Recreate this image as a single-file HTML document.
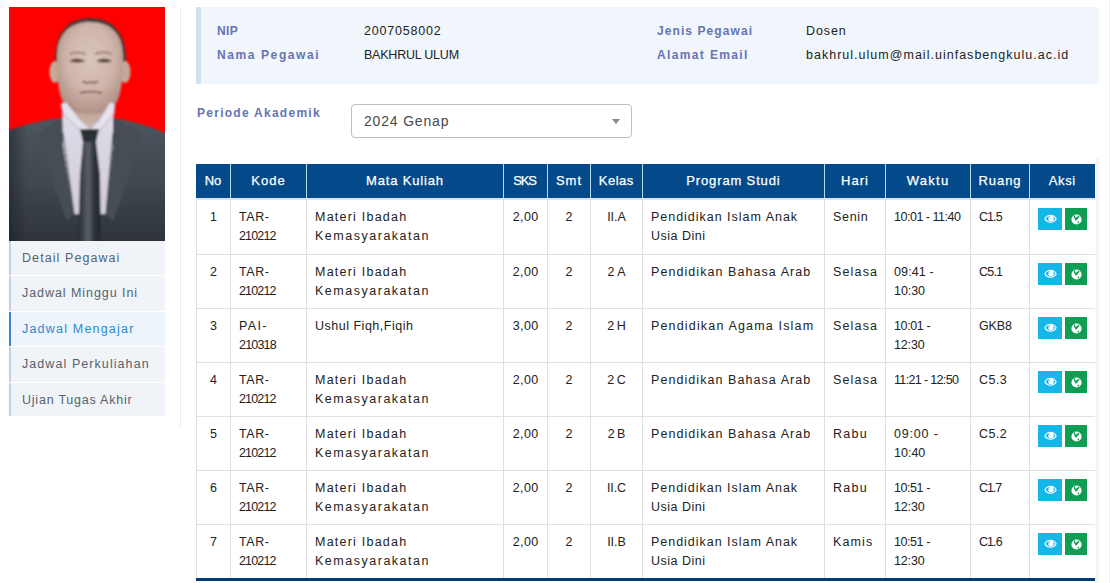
<!DOCTYPE html>
<html><head><meta charset="utf-8">
<style>
* { margin:0; padding:0; box-sizing:border-box; }
html,body { width:1110px; height:583px; overflow:hidden; background:#fff; }
body { font-family:"Liberation Sans", sans-serif; position:relative; color:#222; }
#photo { position:absolute; left:9px; top:7px; width:156px; height:234px; overflow:hidden; }
#photo svg { display:block; }
.menu { position:absolute; left:9px; width:156px; height:34px; background:#f0f4f8; border-left:2px solid #c5d0db; color:#56626d; font-size:12.5px; line-height:35px; padding-left:11px; white-space:nowrap; overflow:hidden; }
.menu.active { border-left-color:#3a86cc; color:#2b8ad2; background:#edf4fb; }
#sideline { position:absolute; left:180px; top:7px; width:1px; height:421px; background:#ececec; }
#info { position:absolute; left:196px; top:7px; width:903px; height:77px; background:#f0f6fc; border-left:5px solid #cfe1ef; }
.lbl { position:absolute; font-size:12px; font-weight:bold; color:#6674b4; white-space:nowrap; }
.val { position:absolute; font-size:12.5px; color:#222; white-space:nowrap; }
#periode { position:absolute; left:197px; top:106px; font-size:12px; font-weight:bold; color:#6674b4; white-space:nowrap; }
#sel { position:absolute; left:351px; top:104px; width:281px; height:34px; border:1px solid #bfbfbf; border-radius:4px; background:#fff; }
#sel .st { position:absolute; left:12px; top:8px; font-size:14px; color:#4a4a4a; white-space:nowrap; }
#sel i { position:absolute; left:260px; top:14px; width:0; height:0; border-style:solid; border-width:5px 4px 0 4px; border-color:#888 transparent transparent transparent; }
.th { position:absolute; top:164px; height:34px; background:#044a8b; color:#fff; font-size:13px; -webkit-text-stroke:0.25px #fff; line-height:34px; text-align:center; white-space:nowrap; }
.thsep { position:absolute; top:164px; width:1px; height:34px; background:#b3daf2; }
#thb { position:absolute; left:196px; top:198px; width:899px; height:2px; background:#dfe3e8; }
.td { position:absolute; padding:8px 8px; font-size:12.5px; line-height:19px; color:#222; white-space:nowrap; }
.td.c { text-align:center; padding:8px 0; }
.hsep { position:absolute; left:196px; width:899px; height:1px; background:#e0e0e0; }
.vsep { position:absolute; top:198px; width:1px; height:380px; background:#e0e0e0; }
#tfoot { position:absolute; left:196px; top:578px; width:899px; height:3px; background:#033c72; }
#scr { position:absolute; left:1096px; top:158px; width:3px; height:425px; background:#f4f4f4; border-radius:1px 1px 0 0; }
.btn { position:absolute; height:22px; display:flex; align-items:center; justify-content:center; }
.btn svg { display:block; }
.bi { left:1038px; width:24px; background:#17b6e9; }
.bs { left:1065px; width:22px; background:#0e9d52; }
#rline { position:absolute; left:1109px; top:0; width:1px; height:583px; background:#f0f0f0; }

</style></head><body>
<div id="photo"><svg width="156" height="234" viewBox="0 0 156 234">
<defs>
<radialGradient id="skin" cx="50%" cy="40%" r="64%"><stop offset="0" stop-color="#d9c5bb"/><stop offset="0.55" stop-color="#cfb5aa"/><stop offset="1" stop-color="#ac8c80"/></radialGradient>
<linearGradient id="neck" x1="0" y1="0" x2="0" y2="1"><stop offset="0" stop-color="#b39489"/><stop offset="1" stop-color="#cdb4a8"/></linearGradient>
<linearGradient id="suit" x1="0" y1="0" x2="0" y2="1"><stop offset="0" stop-color="#4d555d"/><stop offset="0.5" stop-color="#40474f"/><stop offset="1" stop-color="#2b3037"/></linearGradient><linearGradient id="ledge" x1="0" y1="0" x2="1" y2="0"><stop offset="0" stop-color="#1c1f25" stop-opacity="0.8"/><stop offset="1" stop-color="#1c1f25" stop-opacity="0"/></linearGradient>
<linearGradient id="shirt" x1="0" y1="0" x2="0" y2="1"><stop offset="0" stop-color="#e0dce8"/><stop offset="1" stop-color="#d0ccd9"/></linearGradient>
<linearGradient id="tie" x1="0" y1="0" x2="1" y2="0"><stop offset="0" stop-color="#25292f"/><stop offset="0.45" stop-color="#5a616a"/><stop offset="0.7" stop-color="#2f3339"/><stop offset="1" stop-color="#22252b"/></linearGradient>
<clipPath id="suitclip"><path d="M-8 127 C10 118 34 113 53 111 L104 111 C124 114 146 120 164 130 L164 244 L-8 244 Z"/></clipPath><filter id="bl" x="-20%" y="-20%" width="140%" height="140%"><feGaussianBlur stdDeviation="0.8"/></filter>
</defs>
<rect width="156" height="234" fill="#fe0000"/>
<g filter="url(#bl)">
<path d="M46 56 C45 24 61 11 81 11 C103 11 118 26 117 56 L115 74 L47 74 Z" fill="#4a3a3a"/>
<ellipse cx="46" cy="65" rx="5.5" ry="11" fill="#c6a898"/>
<ellipse cx="116" cy="65" rx="5.5" ry="11" fill="#c6a898"/>
<path d="M-8 127 C10 118 34 113 53 111 L104 111 C124 114 146 120 164 130 L164 244 L-8 244 Z" fill="url(#suit)"/>
<path d="M53 96 L105 96 L104 140 L97 207 L65 207 L54 140 Z" fill="url(#shirt)"/>
<path d="M56 84 L105 84 L104 100 L81 121 L57 100 Z" fill="url(#neck)"/>
<path d="M48 52 C47 25 63 15 81 15 C101 15 115 26 114 52 C114 74 112 90 106 98 C100 105 90 107 81 107 C72 107 62 105 56 98 C50 90 48 74 48 52 Z" fill="url(#skin)"/>
<path d="M52 97 L57 95 L73 115 L81 122 L74 126 L54 107 Z" fill="#e6e2ec" stroke="#a8a4b4" stroke-width="0.8"/>
<path d="M106 97 L101 95 L89 115 L81 122 L88 126 L105 107 Z" fill="#e6e2ec" stroke="#a8a4b4" stroke-width="0.8"/>
<rect x="-8" y="110" width="26" height="134" fill="url(#ledge)" clip-path="url(#suitclip)"/>
<path d="M53 111 L54 140 L65 207 L58 214 L38 160 L30 126 Z" fill="#464d55"/>
<path d="M104 111 L104 140 L97 207 L104 214 L124 160 L132 126 Z" fill="#464d55"/>
<path d="M54 126 L65 207" stroke="#363b42" stroke-width="1"/>
<path d="M104 126 L97 207" stroke="#363b42" stroke-width="1"/>
<path d="M71 122 L90 122 L87 135 L74 135 Z" fill="#2c3036"/>
<path d="M74 135 L87 135 L91 168 L92 244 L69 244 L71 168 Z" fill="url(#tie)"/>
<path d="M61 47 C65 45 72 45 77 47 M86 47 C90 45 97 45 103 47" stroke="#8a7068" stroke-width="1.6" fill="none"/>
<path d="M61 54 C65 51.5 71 51.5 75.5 54 C71 55.5 65 55.5 61 54 Z M88 54 C92 51.5 98 51.5 102.5 54 C98 55.5 92 55.5 88 54 Z" fill="#4a3430" stroke="#5a4440" stroke-width="0.8"/>
<path d="M74 74 C76 76 79 76 81 75 C83 76 86 76 89 74" stroke="#7a5a52" stroke-width="1.8" fill="none"/>
<path d="M71 86 C77 84.5 86 84.5 93 86" stroke="#8a645c" stroke-width="2" fill="none"/>
<path d="M74 89 C78 91 85 91 90 89" stroke="#c9a29a" stroke-width="1.6" fill="none"/>
</g>
</svg>
</div>
<div class="menu" style="top:241px;height:34px"><span style="letter-spacing:1.077px;margin-right:-1.077px">Detail Pegawai</span></div><div class="menu" style="top:276px;height:35px"><span style="letter-spacing:0.938px;margin-right:-0.938px">Jadwal Minggu Ini</span></div><div class="menu active" style="top:312px;height:34px"><span style="letter-spacing:1.2px;margin-right:-1.2px">Jadwal Mengajar</span></div><div class="menu" style="top:347px;height:35px"><span style="letter-spacing:1.071px;margin-right:-1.071px">Jadwal Perkuliahan</span></div><div class="menu" style="top:383px;height:33px"><span style="letter-spacing:0.775px;margin-right:-0.775px">Ujian Tugas Akhir</span></div>
<div id="sideline"></div>
<div id="info"></div>
<div class="lbl" style="left:217px;top:24px"><span style="letter-spacing:0.35px;margin-right:-0.35px">NIP</span></div>
<div class="lbl" style="left:217px;top:48px"><span style="letter-spacing:1.6px;margin-right:-1.6px">Nama Pegawai</span></div>
<div class="val" style="left:364px;top:24px"><span style="letter-spacing:0.811px;margin-right:-0.811px">2007058002</span></div>
<div class="val" style="left:364px;top:48px"><span style="letter-spacing:-0.218px;margin-right:0.218px">BAKHRUL ULUM</span></div>
<div class="lbl" style="left:657px;top:24px"><span style="letter-spacing:1.083px;margin-right:-1.083px">Jenis Pegawai</span></div>
<div class="lbl" style="left:657px;top:48px"><span style="letter-spacing:1.364px;margin-right:-1.364px">Alamat Email</span></div>
<div class="val" style="left:806px;top:24px"><span style="letter-spacing:0.9px;margin-right:-0.9px">Dosen</span></div>
<div class="val" style="left:806px;top:48px"><span style="letter-spacing:1.016px;margin-right:-1.016px">bakhrul.ulum@mail.uinfasbengkulu.ac.id</span></div>
<div id="periode"><span style="letter-spacing:1.267px;margin-right:-1.267px">Periode Akademik</span></div>
<div id="sel"><div class="st"><span style="letter-spacing:0.822px;margin-right:-0.822px">2024 Genap</span></div><i></i></div>
<div id="scr"></div><div id="rline"></div>
<div class="th" style="left:196px;width:34px"><span style="letter-spacing:0.0px;margin-right:-0.0px">No</span></div><div class="th" style="left:230px;width:76px"><span style="letter-spacing:1.1px;margin-right:-1.1px">Kode</span></div><div class="th" style="left:306px;width:197px"><span style="letter-spacing:0.84px;margin-right:-0.84px">Mata Kuliah</span></div><div class="th" style="left:503px;width:44px"><span style="letter-spacing:-1.15px;margin-right:1.15px">SKS</span></div><div class="th" style="left:547px;width:43px"><span style="letter-spacing:1.0px;margin-right:-1.0px">Smt</span></div><div class="th" style="left:590px;width:52px"><span style="letter-spacing:0.5px;margin-right:-0.5px">Kelas</span></div><div class="th" style="left:642px;width:182px"><span style="letter-spacing:0.858px;margin-right:-0.858px">Program Studi</span></div><div class="th" style="left:824px;width:61px"><span style="letter-spacing:1.067px;margin-right:-1.067px">Hari</span></div><div class="th" style="left:885px;width:85px"><span style="letter-spacing:1.275px;margin-right:-1.275px">Waktu</span></div><div class="th" style="left:970px;width:59px"><span style="letter-spacing:0.95px;margin-right:-0.95px">Ruang</span></div><div class="th" style="left:1029px;width:66px"><span style="letter-spacing:0.567px;margin-right:-0.567px">Aksi</span></div><div class="thsep" style="left:230px"></div><div class="thsep" style="left:306px"></div><div class="thsep" style="left:503px"></div><div class="thsep" style="left:547px"></div><div class="thsep" style="left:590px"></div><div class="thsep" style="left:642px"></div><div class="thsep" style="left:824px"></div><div class="thsep" style="left:885px"></div><div class="thsep" style="left:970px"></div><div class="thsep" style="left:1029px"></div><div class="td c" style="left:197px;top:200px;width:33px"><span style="letter-spacing:0.3px;margin-right:-0.3px">1</span></div><div class="td" style="left:231px;top:200px;width:75px"><span style="letter-spacing:0.6px;margin-right:-0.6px">TAR-</span><br><span style="letter-spacing:-0.84px;margin-right:0.84px">210212</span></div><div class="td" style="left:307px;top:200px;width:196px"><span style="letter-spacing:1.225px;margin-right:-1.225px">Materi Ibadah</span><br><span style="letter-spacing:1.515px;margin-right:-1.515px">Kemasyarakatan</span></div><div class="td c" style="left:504px;top:200px;width:43px"><span style="letter-spacing:0.433px;margin-right:-0.433px">2,00</span></div><div class="td c" style="left:548px;top:200px;width:42px"><span style="letter-spacing:0.3px;margin-right:-0.3px">2</span></div><div class="td c" style="left:591px;top:200px;width:51px"><span style="letter-spacing:-0.067px;margin-right:0.067px">II.A</span></div><div class="td" style="left:643px;top:200px;width:181px"><span style="letter-spacing:0.98px;margin-right:-0.98px">Pendidikan Islam Anak</span><br><span style="letter-spacing:0.5px;margin-right:-0.5px">Usia Dini</span></div><div class="td" style="left:825px;top:200px;width:60px"><span style="letter-spacing:0.675px;margin-right:-0.675px">Senin</span></div><div class="td" style="left:886px;top:200px;width:84px"><span style="letter-spacing:-0.483px;margin-right:0.483px">10:01 - 11:40</span></div><div class="td" style="left:971px;top:200px;width:58px"><span style="letter-spacing:-0.933px;margin-right:0.933px">C1.5</span></div><div class="btn bi" style="top:208px"><svg width="13" height="10" viewBox="0 0 13 10"><path d="M0.9 4.7 C3.2 0.1 9.8 0.1 12.1 4.7 C9.8 9.3 3.2 9.3 0.9 4.7 Z" fill="none" stroke="#fff" stroke-width="1.2"/><circle cx="6.9" cy="4.3" r="2.9" fill="#fff"/><path d="M4.9 5.2 C4.6 3.8 5 2.8 5.9 2.2" stroke="#17b6e9" stroke-width="0.8" fill="none"/></svg></div><div class="btn bs" style="top:208px"><svg width="11" height="11" viewBox="0 0 11 11"><circle cx="5.5" cy="5.5" r="5.1" fill="#fff"/><path d="M2.6 1.4 L3.9 1.2 L4.6 3.9 L7.6 1.7 L8.6 2.6 L5.4 6.6 L4.7 6.8 L3 3.6 Z" fill="#0e9d52"/><circle cx="7.3" cy="8.4" r="0.8" fill="#0e9d52"/></svg></div><div class="td c" style="left:197px;top:255px;width:33px"><span style="letter-spacing:0.3px;margin-right:-0.3px">2</span></div><div class="td" style="left:231px;top:255px;width:75px"><span style="letter-spacing:0.6px;margin-right:-0.6px">TAR-</span><br><span style="letter-spacing:-0.84px;margin-right:0.84px">210212</span></div><div class="td" style="left:307px;top:255px;width:196px"><span style="letter-spacing:1.225px;margin-right:-1.225px">Materi Ibadah</span><br><span style="letter-spacing:1.515px;margin-right:-1.515px">Kemasyarakatan</span></div><div class="td c" style="left:504px;top:255px;width:43px"><span style="letter-spacing:0.433px;margin-right:-0.433px">2,00</span></div><div class="td c" style="left:548px;top:255px;width:42px"><span style="letter-spacing:0.3px;margin-right:-0.3px">2</span></div><div class="td c" style="left:591px;top:255px;width:51px"><span style="letter-spacing:-0.05px;margin-right:0.05px">2 A</span></div><div class="td" style="left:643px;top:255px;width:181px"><span style="letter-spacing:1.067px;margin-right:-1.067px">Pendidikan Bahasa Arab</span></div><div class="td" style="left:825px;top:255px;width:60px"><span style="letter-spacing:1.16px;margin-right:-1.16px">Selasa</span></div><div class="td" style="left:886px;top:255px;width:84px"><span style="letter-spacing:0.133px;margin-right:-0.133px">09:41 -</span><br><span style="letter-spacing:-0.075px;margin-right:0.075px">10:30</span></div><div class="td" style="left:971px;top:255px;width:58px"><span style="letter-spacing:-0.8px;margin-right:0.8px">C5.1</span></div><div class="btn bi" style="top:263px"><svg width="13" height="10" viewBox="0 0 13 10"><path d="M0.9 4.7 C3.2 0.1 9.8 0.1 12.1 4.7 C9.8 9.3 3.2 9.3 0.9 4.7 Z" fill="none" stroke="#fff" stroke-width="1.2"/><circle cx="6.9" cy="4.3" r="2.9" fill="#fff"/><path d="M4.9 5.2 C4.6 3.8 5 2.8 5.9 2.2" stroke="#17b6e9" stroke-width="0.8" fill="none"/></svg></div><div class="btn bs" style="top:263px"><svg width="11" height="11" viewBox="0 0 11 11"><circle cx="5.5" cy="5.5" r="5.1" fill="#fff"/><path d="M2.6 1.4 L3.9 1.2 L4.6 3.9 L7.6 1.7 L8.6 2.6 L5.4 6.6 L4.7 6.8 L3 3.6 Z" fill="#0e9d52"/><circle cx="7.3" cy="8.4" r="0.8" fill="#0e9d52"/></svg></div><div class="td c" style="left:197px;top:309px;width:33px"><span style="letter-spacing:0.3px;margin-right:-0.3px">3</span></div><div class="td" style="left:231px;top:309px;width:75px"><span style="letter-spacing:1.333px;margin-right:-1.333px">PAI-</span><br><span style="letter-spacing:-0.8px;margin-right:0.8px">210318</span></div><div class="td" style="left:307px;top:309px;width:196px"><span style="letter-spacing:0.507px;margin-right:-0.507px">Ushul Fiqh,Fiqih</span></div><div class="td c" style="left:504px;top:309px;width:43px"><span style="letter-spacing:0.433px;margin-right:-0.433px">3,00</span></div><div class="td c" style="left:548px;top:309px;width:42px"><span style="letter-spacing:0.3px;margin-right:-0.3px">2</span></div><div class="td c" style="left:591px;top:309px;width:51px"><span style="letter-spacing:-0.55px;margin-right:0.55px">2 H</span></div><div class="td" style="left:643px;top:309px;width:181px"><span style="letter-spacing:1.167px;margin-right:-1.167px">Pendidikan Agama Islam</span></div><div class="td" style="left:825px;top:309px;width:60px"><span style="letter-spacing:1.16px;margin-right:-1.16px">Selasa</span></div><div class="td" style="left:886px;top:309px;width:84px"><span style="letter-spacing:-0.367px;margin-right:0.367px">10:01 -</span><br><span style="letter-spacing:-0.15px;margin-right:0.15px">12:30</span></div><div class="td" style="left:971px;top:309px;width:58px"><span style="letter-spacing:-0.1px;margin-right:0.1px">GKB8</span></div><div class="btn bi" style="top:317px"><svg width="13" height="10" viewBox="0 0 13 10"><path d="M0.9 4.7 C3.2 0.1 9.8 0.1 12.1 4.7 C9.8 9.3 3.2 9.3 0.9 4.7 Z" fill="none" stroke="#fff" stroke-width="1.2"/><circle cx="6.9" cy="4.3" r="2.9" fill="#fff"/><path d="M4.9 5.2 C4.6 3.8 5 2.8 5.9 2.2" stroke="#17b6e9" stroke-width="0.8" fill="none"/></svg></div><div class="btn bs" style="top:317px"><svg width="11" height="11" viewBox="0 0 11 11"><circle cx="5.5" cy="5.5" r="5.1" fill="#fff"/><path d="M2.6 1.4 L3.9 1.2 L4.6 3.9 L7.6 1.7 L8.6 2.6 L5.4 6.6 L4.7 6.8 L3 3.6 Z" fill="#0e9d52"/><circle cx="7.3" cy="8.4" r="0.8" fill="#0e9d52"/></svg></div><div class="td c" style="left:197px;top:363px;width:33px"><span style="letter-spacing:0.3px;margin-right:-0.3px">4</span></div><div class="td" style="left:231px;top:363px;width:75px"><span style="letter-spacing:0.6px;margin-right:-0.6px">TAR-</span><br><span style="letter-spacing:-0.84px;margin-right:0.84px">210212</span></div><div class="td" style="left:307px;top:363px;width:196px"><span style="letter-spacing:1.225px;margin-right:-1.225px">Materi Ibadah</span><br><span style="letter-spacing:1.515px;margin-right:-1.515px">Kemasyarakatan</span></div><div class="td c" style="left:504px;top:363px;width:43px"><span style="letter-spacing:0.433px;margin-right:-0.433px">2,00</span></div><div class="td c" style="left:548px;top:363px;width:42px"><span style="letter-spacing:0.3px;margin-right:-0.3px">2</span></div><div class="td c" style="left:591px;top:363px;width:51px"><span style="letter-spacing:-0.55px;margin-right:0.55px">2 C</span></div><div class="td" style="left:643px;top:363px;width:181px"><span style="letter-spacing:1.067px;margin-right:-1.067px">Pendidikan Bahasa Arab</span></div><div class="td" style="left:825px;top:363px;width:60px"><span style="letter-spacing:1.16px;margin-right:-1.16px">Selasa</span></div><div class="td" style="left:886px;top:363px;width:84px"><span style="letter-spacing:-0.65px;margin-right:0.65px">11:21 - 12:50</span></div><div class="td" style="left:971px;top:363px;width:58px"><span style="letter-spacing:0.467px;margin-right:-0.467px">C5.3</span></div><div class="btn bi" style="top:371px"><svg width="13" height="10" viewBox="0 0 13 10"><path d="M0.9 4.7 C3.2 0.1 9.8 0.1 12.1 4.7 C9.8 9.3 3.2 9.3 0.9 4.7 Z" fill="none" stroke="#fff" stroke-width="1.2"/><circle cx="6.9" cy="4.3" r="2.9" fill="#fff"/><path d="M4.9 5.2 C4.6 3.8 5 2.8 5.9 2.2" stroke="#17b6e9" stroke-width="0.8" fill="none"/></svg></div><div class="btn bs" style="top:371px"><svg width="11" height="11" viewBox="0 0 11 11"><circle cx="5.5" cy="5.5" r="5.1" fill="#fff"/><path d="M2.6 1.4 L3.9 1.2 L4.6 3.9 L7.6 1.7 L8.6 2.6 L5.4 6.6 L4.7 6.8 L3 3.6 Z" fill="#0e9d52"/><circle cx="7.3" cy="8.4" r="0.8" fill="#0e9d52"/></svg></div><div class="td c" style="left:197px;top:417px;width:33px"><span style="letter-spacing:0.3px;margin-right:-0.3px">5</span></div><div class="td" style="left:231px;top:417px;width:75px"><span style="letter-spacing:0.6px;margin-right:-0.6px">TAR-</span><br><span style="letter-spacing:-0.84px;margin-right:0.84px">210212</span></div><div class="td" style="left:307px;top:417px;width:196px"><span style="letter-spacing:1.225px;margin-right:-1.225px">Materi Ibadah</span><br><span style="letter-spacing:1.515px;margin-right:-1.515px">Kemasyarakatan</span></div><div class="td c" style="left:504px;top:417px;width:43px"><span style="letter-spacing:0.433px;margin-right:-0.433px">2,00</span></div><div class="td c" style="left:548px;top:417px;width:42px"><span style="letter-spacing:0.3px;margin-right:-0.3px">2</span></div><div class="td c" style="left:591px;top:417px;width:51px"><span style="letter-spacing:-0.55px;margin-right:0.55px">2 B</span></div><div class="td" style="left:643px;top:417px;width:181px"><span style="letter-spacing:1.067px;margin-right:-1.067px">Pendidikan Bahasa Arab</span></div><div class="td" style="left:825px;top:417px;width:60px"><span style="letter-spacing:1.233px;margin-right:-1.233px">Rabu</span></div><div class="td" style="left:886px;top:417px;width:84px"><span style="letter-spacing:0.817px;margin-right:-0.817px">09:00 -</span><br><span style="letter-spacing:0.0px;margin-right:-0.0px">10:40</span></div><div class="td" style="left:971px;top:417px;width:58px"><span style="letter-spacing:0.467px;margin-right:-0.467px">C5.2</span></div><div class="btn bi" style="top:425px"><svg width="13" height="10" viewBox="0 0 13 10"><path d="M0.9 4.7 C3.2 0.1 9.8 0.1 12.1 4.7 C9.8 9.3 3.2 9.3 0.9 4.7 Z" fill="none" stroke="#fff" stroke-width="1.2"/><circle cx="6.9" cy="4.3" r="2.9" fill="#fff"/><path d="M4.9 5.2 C4.6 3.8 5 2.8 5.9 2.2" stroke="#17b6e9" stroke-width="0.8" fill="none"/></svg></div><div class="btn bs" style="top:425px"><svg width="11" height="11" viewBox="0 0 11 11"><circle cx="5.5" cy="5.5" r="5.1" fill="#fff"/><path d="M2.6 1.4 L3.9 1.2 L4.6 3.9 L7.6 1.7 L8.6 2.6 L5.4 6.6 L4.7 6.8 L3 3.6 Z" fill="#0e9d52"/><circle cx="7.3" cy="8.4" r="0.8" fill="#0e9d52"/></svg></div><div class="td c" style="left:197px;top:471px;width:33px"><span style="letter-spacing:0.3px;margin-right:-0.3px">6</span></div><div class="td" style="left:231px;top:471px;width:75px"><span style="letter-spacing:0.6px;margin-right:-0.6px">TAR-</span><br><span style="letter-spacing:-0.84px;margin-right:0.84px">210212</span></div><div class="td" style="left:307px;top:471px;width:196px"><span style="letter-spacing:1.225px;margin-right:-1.225px">Materi Ibadah</span><br><span style="letter-spacing:1.515px;margin-right:-1.515px">Kemasyarakatan</span></div><div class="td c" style="left:504px;top:471px;width:43px"><span style="letter-spacing:0.433px;margin-right:-0.433px">2,00</span></div><div class="td c" style="left:548px;top:471px;width:42px"><span style="letter-spacing:0.3px;margin-right:-0.3px">2</span></div><div class="td c" style="left:591px;top:471px;width:51px"><span style="letter-spacing:-0.067px;margin-right:0.067px">II.C</span></div><div class="td" style="left:643px;top:471px;width:181px"><span style="letter-spacing:0.98px;margin-right:-0.98px">Pendidikan Islam Anak</span><br><span style="letter-spacing:0.5px;margin-right:-0.5px">Usia Dini</span></div><div class="td" style="left:825px;top:471px;width:60px"><span style="letter-spacing:1.233px;margin-right:-1.233px">Rabu</span></div><div class="td" style="left:886px;top:471px;width:84px"><span style="letter-spacing:-0.433px;margin-right:0.433px">10:51 -</span><br><span style="letter-spacing:-0.15px;margin-right:0.15px">12:30</span></div><div class="td" style="left:971px;top:471px;width:58px"><span style="letter-spacing:-1.1px;margin-right:1.1px">C1.7</span></div><div class="btn bi" style="top:479px"><svg width="13" height="10" viewBox="0 0 13 10"><path d="M0.9 4.7 C3.2 0.1 9.8 0.1 12.1 4.7 C9.8 9.3 3.2 9.3 0.9 4.7 Z" fill="none" stroke="#fff" stroke-width="1.2"/><circle cx="6.9" cy="4.3" r="2.9" fill="#fff"/><path d="M4.9 5.2 C4.6 3.8 5 2.8 5.9 2.2" stroke="#17b6e9" stroke-width="0.8" fill="none"/></svg></div><div class="btn bs" style="top:479px"><svg width="11" height="11" viewBox="0 0 11 11"><circle cx="5.5" cy="5.5" r="5.1" fill="#fff"/><path d="M2.6 1.4 L3.9 1.2 L4.6 3.9 L7.6 1.7 L8.6 2.6 L5.4 6.6 L4.7 6.8 L3 3.6 Z" fill="#0e9d52"/><circle cx="7.3" cy="8.4" r="0.8" fill="#0e9d52"/></svg></div><div class="td c" style="left:197px;top:525px;width:33px"><span style="letter-spacing:0.3px;margin-right:-0.3px">7</span></div><div class="td" style="left:231px;top:525px;width:75px"><span style="letter-spacing:0.6px;margin-right:-0.6px">TAR-</span><br><span style="letter-spacing:-0.84px;margin-right:0.84px">210212</span></div><div class="td" style="left:307px;top:525px;width:196px"><span style="letter-spacing:1.225px;margin-right:-1.225px">Materi Ibadah</span><br><span style="letter-spacing:1.515px;margin-right:-1.515px">Kemasyarakatan</span></div><div class="td c" style="left:504px;top:525px;width:43px"><span style="letter-spacing:0.433px;margin-right:-0.433px">2,00</span></div><div class="td c" style="left:548px;top:525px;width:42px"><span style="letter-spacing:0.3px;margin-right:-0.3px">2</span></div><div class="td c" style="left:591px;top:525px;width:51px"><span style="letter-spacing:-0.067px;margin-right:0.067px">II.B</span></div><div class="td" style="left:643px;top:525px;width:181px"><span style="letter-spacing:0.98px;margin-right:-0.98px">Pendidikan Islam Anak</span><br><span style="letter-spacing:0.5px;margin-right:-0.5px">Usia Dini</span></div><div class="td" style="left:825px;top:525px;width:60px"><span style="letter-spacing:1.1px;margin-right:-1.1px">Kamis</span></div><div class="td" style="left:886px;top:525px;width:84px"><span style="letter-spacing:-0.433px;margin-right:0.433px">10:51 -</span><br><span style="letter-spacing:-0.15px;margin-right:0.15px">12:30</span></div><div class="td" style="left:971px;top:525px;width:58px"><span style="letter-spacing:-0.933px;margin-right:0.933px">C1.6</span></div><div class="btn bi" style="top:533px"><svg width="13" height="10" viewBox="0 0 13 10"><path d="M0.9 4.7 C3.2 0.1 9.8 0.1 12.1 4.7 C9.8 9.3 3.2 9.3 0.9 4.7 Z" fill="none" stroke="#fff" stroke-width="1.2"/><circle cx="6.9" cy="4.3" r="2.9" fill="#fff"/><path d="M4.9 5.2 C4.6 3.8 5 2.8 5.9 2.2" stroke="#17b6e9" stroke-width="0.8" fill="none"/></svg></div><div class="btn bs" style="top:533px"><svg width="11" height="11" viewBox="0 0 11 11"><circle cx="5.5" cy="5.5" r="5.1" fill="#fff"/><path d="M2.6 1.4 L3.9 1.2 L4.6 3.9 L7.6 1.7 L8.6 2.6 L5.4 6.6 L4.7 6.8 L3 3.6 Z" fill="#0e9d52"/><circle cx="7.3" cy="8.4" r="0.8" fill="#0e9d52"/></svg></div><div class="hsep" style="top:254px"></div><div class="hsep" style="top:308px"></div><div class="hsep" style="top:362px"></div><div class="hsep" style="top:416px"></div><div class="hsep" style="top:470px"></div><div class="hsep" style="top:524px"></div><div class="vsep" style="left:196px"></div><div class="vsep" style="left:230px"></div><div class="vsep" style="left:306px"></div><div class="vsep" style="left:503px"></div><div class="vsep" style="left:547px"></div><div class="vsep" style="left:590px"></div><div class="vsep" style="left:642px"></div><div class="vsep" style="left:824px"></div><div class="vsep" style="left:885px"></div><div class="vsep" style="left:970px"></div><div class="vsep" style="left:1029px"></div>
<div id="thb"></div>
<div id="tfoot"></div>
</body></html>
